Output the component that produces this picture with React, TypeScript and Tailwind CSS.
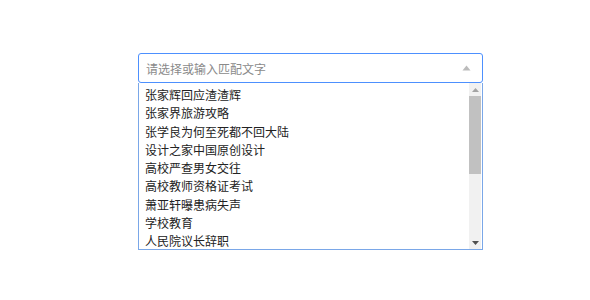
import { useState } from 'react'

const items = [
  '张家辉回应渣渣辉',
  '张家界旅游攻略',
  '张学良为何至死都不回大陆',
  '设计之家中国原创设计',
  '高校严查男女交往',
  '高校教师资格证考试',
  '萧亚轩曝患病失声',
  '学校教育',
  '人民院议长辞职',
]

export default function App() {
  const [value, setValue] = useState('')

  return (
    <div className="h-[300px] w-[590px] bg-white pt-[53px] pl-[138px] font-['Microsoft_YaHei','Noto_Sans_CJK_SC',sans-serif]">
      <div className="w-[345px]">
        <div className="flex h-[30px] items-center rounded-[3px] border border-[#4d90fe] bg-white pl-[7px] pr-[8px]">
          <input
            className="h-full flex-1 bg-transparent text-[12px] text-[#333] outline-none placeholder:text-[#8a8a8a]"
            placeholder="请选择或输入匹配文字"
            value={value}
            onChange={(e) => setValue(e.target.value)}
            autoFocus
          />
          <svg width="9" height="6" viewBox="0 0 9 6" className="mr-[3px]">
            <path d="M4.5 0.5 L8.5 5.5 L0.5 5.5 Z" fill="#bbb" />
          </svg>
        </div>
        <div className="flex h-[167px] border border-t-0 border-[#7aa7e8] bg-white">
          <div className="flex-1 overflow-hidden">
            <ul className="pt-[3px]">
              {items.map((item) => (
                <li key={item} className="h-[18.3px] truncate pl-[6px] text-[12px] leading-[18.3px] text-[#222]">
                  {item}
                </li>
              ))}
            </ul>
          </div>
          <div className="mr-[1px] flex w-[12px] flex-col bg-[#f1f1f1]">
            <div className="flex h-[13px] items-center justify-center">
              <svg width="7" height="4" viewBox="0 0 7 4"><path d="M3.5 0 L7 4 L0 4 Z" fill="#a3a3a3" /></svg>
            </div>
            <div className="h-[78px] bg-[#c1c1c1]" />
            <div className="flex-1" />
            <div className="flex h-[13px] items-center justify-center">
              <svg width="7" height="4" viewBox="0 0 7 4"><path d="M0 0 L7 0 L3.5 4 Z" fill="#505050" /></svg>
            </div>
          </div>
        </div>
      </div>
    </div>
  )
}
